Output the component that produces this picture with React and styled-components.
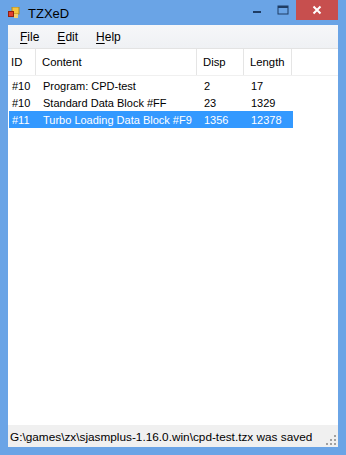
import React from "react";
import styled, { createGlobalStyle } from "styled-components";

const Global = createGlobalStyle`
  html, body { margin: 0; padding: 0; }
  body { font-family: "Liberation Sans", Arial, sans-serif; background: #fff; }
`;

const Window = styled.div`
  width: 346px;
  height: 455px;
  box-sizing: border-box;
  background: #6aa4e6;
  padding: 0 8px 8px 8px;
  display: flex;
  flex-direction: column;
`;

const TitleBar = styled.div`
  height: 25px;
  display: flex;
  align-items: center;
`;

const Title = styled.span`
  font-size: 13px;
  color: #000;
  margin-left: 8px;
  margin-top: 1px;
`;

const Controls = styled.div`
  margin-left: auto;
  display: flex;
  align-self: flex-start;
  height: 20px;
`;

const CtrlBtn = styled.div`
  width: ${(p) => p.w}px;
  height: 20px;
  display: flex;
  align-items: center;
  justify-content: center;
  background: ${(p) => (p.close ? "#c74f4e" : "transparent")};
`;

const Client = styled.div`
  flex: 1;
  display: flex;
  flex-direction: column;
  background: #f0f0f0;
  min-height: 0;
`;

const MenuBar = styled.div`
  height: 23px;
  display: flex;
  align-items: center;
  padding-left: 4px;
  background: linear-gradient(#f6f7f9, #eff1f4);
  font-size: 12px;
`;

const MenuItem = styled.span`
  padding: 0 8px;
  margin-right: 2px;
  color: #000;
  u { text-decoration: underline; text-underline-offset: 2px; }
`;

const ListView = styled.div`
  flex: 1;
  background: #fff;
  border-top: 1px solid #e3e3e3;
  display: flex;
  flex-direction: column;
  font-size: 11px;
`;

const Header = styled.div`
  height: 26px;
  display: flex;
  border-bottom: 1px solid #f0f0f0;
  font-size: 11.3px;
`;

const HeadCell = styled.div`
  width: ${(p) => p.w}px;
  box-sizing: border-box;
  padding-left: ${(p) => p.pl}px;
  display: flex;
  align-items: center;
  border-right: 1px solid #e5e5e5;
  color: #000;
`;

const Row = styled.div`
  height: 17px;
  display: flex;
  align-items: center;
  width: 284px;
  margin-left: 1px;
  background: ${(p) => (p.sel ? "#3399ff" : "transparent")};
  color: ${(p) => (p.sel ? "#fff" : "#000")};
`;

const Cell = styled.div`
  width: ${(p) => p.w}px;
  box-sizing: border-box;
  padding-left: ${(p) => p.pl}px;
  white-space: nowrap;
`;

const Rows = styled.div`
  margin-top: 1px;
  display: flex;
  flex-direction: column;
`;

const StatusBar = styled.div`
  height: 21px;
  display: flex;
  align-items: center;
  padding-left: 2px;
  padding-top: 1px;
  font-size: 11.8px;
  color: #000;
  background: #f0f0f0;
  position: relative;
`;

const Grip = styled.svg`
  position: absolute;
  right: 2px;
  bottom: 2px;
`;

const cols = [
  { w: 28, pl: 3 },
  { w: 161, pl: 6 },
  { w: 47, pl: 6 },
  { w: 48, pl: 6 },
];

const data = [
  ["#10", "Program: CPD-test", "2", "17"],
  ["#10", "Standard Data Block #FF", "23", "1329"],
  ["#11", "Turbo Loading Data Block #F9", "1356", "12378"],
];

export default function App() {
  return (
    <>
      <Global />
      <Window>
        <TitleBar>
          <svg width="12" height="12" viewBox="0 0 12 12">
            <rect x="4" y="0" width="7" height="7" fill="#f5c542" stroke="#b08a20" strokeWidth="1" />
            <rect x="0.5" y="4.5" width="5" height="5" fill="#e04030" stroke="#902010" strokeWidth="1" />
            <rect x="6" y="7" width="4" height="4" fill="#f0d070" />
          </svg>
          <Title>TZXeD</Title>
          <Controls>
            <CtrlBtn w={26}>
              <svg width="10" height="10" viewBox="0 0 10 10">
                <rect x="1" y="6" width="8" height="2" fill="#1e3c64" />
              </svg>
            </CtrlBtn>
            <CtrlBtn w={26}>
              <svg width="12" height="10" viewBox="0 0 12 10">
                <rect x="1" y="1" width="10" height="8" fill="none" stroke="#1e3c64" strokeWidth="1" />
                <rect x="1" y="1" width="10" height="2" fill="#1e3c64" />
              </svg>
            </CtrlBtn>
            <CtrlBtn w={42} close>
              <svg width="10" height="10" viewBox="0 0 10 10">
                <path d="M1.5 1.5 L8.5 8.5 M8.5 1.5 L1.5 8.5" stroke="#fff" strokeWidth="2" />
              </svg>
            </CtrlBtn>
          </Controls>
        </TitleBar>
        <Client>
          <MenuBar>
            <MenuItem><u>F</u>ile</MenuItem>
            <MenuItem><u>E</u>dit</MenuItem>
            <MenuItem><u>H</u>elp</MenuItem>
          </MenuBar>
          <ListView>
            <Header>
              {["ID", "Content", "Disp", "Length"].map((h, i) => (
                <HeadCell key={h} w={cols[i].w} pl={cols[i].pl}>
                  {h}
                </HeadCell>
              ))}
            </Header>
            <Rows>
              {data.map((r, ri) => (
                <Row key={ri} sel={ri === 2}>
                  {r.map((c, ci) => (
                    <Cell key={ci} w={cols[ci].w} pl={cols[ci].pl}>
                      {c}
                    </Cell>
                  ))}
                </Row>
              ))}
            </Rows>
          </ListView>
          <StatusBar>
            G:\games\zx\sjasmplus-1.16.0.win\cpd-test.tzx was saved
            <Grip width="10" height="10" viewBox="0 0 10 10">
              {[[8, 0], [8, 4], [4, 4], [8, 8], [4, 8], [0, 8]].map(([x, y], i) => (
                <rect key={i} x={x} y={y} width="2" height="2" fill="#a0a0a0" />
              ))}
            </Grip>
          </StatusBar>
        </Client>
      </Window>
    </>
  );
}
